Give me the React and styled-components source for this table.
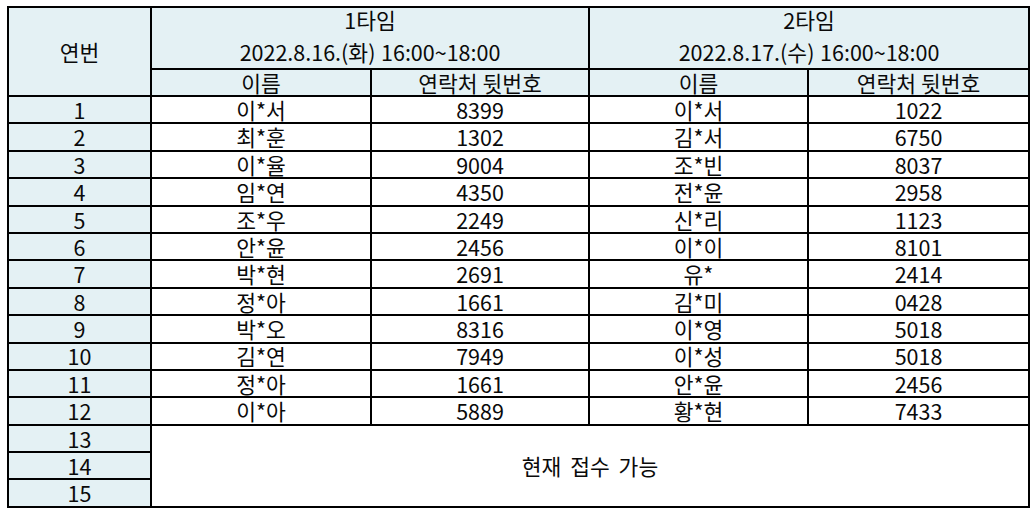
import React from 'react';
import styled, { createGlobalStyle } from 'styled-components';

const GlobalStyle = createGlobalStyle`
	body {
		margin: 0;
		padding: 6px 0 0 7px;
		background: #ffffff;
		font-family: "Noto Sans CJK KR", "Noto Sans", sans-serif;
		color: #0a0a0a;
	}
`;

const Table = styled.table`
	border-collapse: collapse;
	table-layout: fixed;
	width: 1021px;
	font-size: 21.5px;
`;

const Head = styled.th`
	background: #e4f1f4;
	border: 2px solid #000;
	font-weight: 400;
	text-align: center;
	vertical-align: ${props => props.top ? 'top' : 'middle'};
	padding: 0;
	line-height: 1;
	height: ${props => props.h || 27}px;
`;

const SlotTitle = styled.div`
	display: flex;
	flex-direction: column;
	align-items: center;
	gap: 10px;
	padding-top: 1px;
	word-spacing: -2px;
`;

const Cell = styled.td`
	border: 2px solid #000;
	text-align: center;
	vertical-align: middle;
	padding: 0;
	line-height: 1;
	height: 25.4px;
	background: ${props => props.num ? '#e4f1f4' : '#ffffff'};
`;

const Notice = styled.td`
	border: 2px solid #000;
	text-align: center;
	vertical-align: middle;
	padding: 0;
	word-spacing: 4px;
`;

const rows = [
	['이*서', '8399', '이*서', '1022'],
	['최*훈', '1302', '김*서', '6750'],
	['이*율', '9004', '조*빈', '8037'],
	['임*연', '4350', '전*윤', '2958'],
	['조*우', '2249', '신*리', '1123'],
	['안*윤', '2456', '이*이', '8101'],
	['박*현', '2691', '유*', '2414'],
	['정*아', '1661', '김*미', '0428'],
	['박*오', '8316', '이*영', '5018'],
	['김*연', '7949', '이*성', '5018'],
	['정*아', '1661', '안*윤', '2456'],
	['이*아', '5889', '황*현', '7433'],
];

export default function App() {
	return (
		<>
			<GlobalStyle />
			<Table>
				<colgroup>
					<col style={{ width: 143 }} />
					<col style={{ width: 220 }} />
					<col style={{ width: 218 }} />
					<col style={{ width: 219 }} />
					<col style={{ width: 221 }} />
				</colgroup>
				<thead>
					<tr>
						<Head rowSpan={2}>연번</Head>
						<Head colSpan={2} h={60} top>
							<SlotTitle>
								<span>1타임</span>
								<span>2022.8.16.(화)&nbsp;&nbsp;16:00~18:00</span>
							</SlotTitle>
						</Head>
						<Head colSpan={2} h={60} top>
							<SlotTitle>
								<span>2타임</span>
								<span>2022.8.17.(수)&nbsp;&nbsp;16:00~18:00</span>
							</SlotTitle>
						</Head>
					</tr>
					<tr>
						<Head h={25}>이름</Head>
						<Head h={25}>연락처 뒷번호</Head>
						<Head h={25}>이름</Head>
						<Head h={25}>연락처 뒷번호</Head>
					</tr>
				</thead>
				<tbody>
					{rows.map((r, i) => (
						<tr key={i}>
							<Cell num>{i + 1}</Cell>
							{r.map((v, j) => <Cell key={j}>{v}</Cell>)}
						</tr>
					))}
					<tr>
						<Cell num>13</Cell>
						<Notice rowSpan={3} colSpan={4}>현재 접수 가능</Notice>
					</tr>
					<tr><Cell num>14</Cell></tr>
					<tr><Cell num>15</Cell></tr>
				</tbody>
			</Table>
		</>
	);
}
